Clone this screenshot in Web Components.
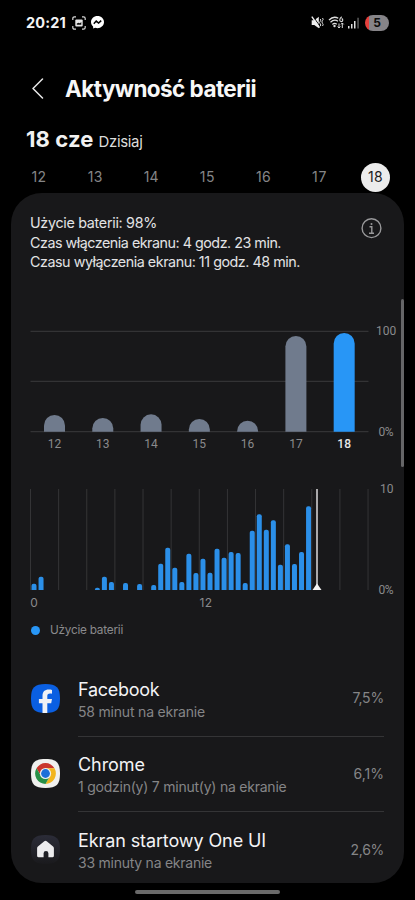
<!DOCTYPE html>
<html lang="pl">
<head>
<meta charset="utf-8">
<title>Aktywność baterii</title>
<style>
html,body{margin:0;background:#000;overflow:hidden}
body{width:415px;height:900px;font-family:Inter,"Noto Sans",sans-serif;color:#f1f1f3}
</style>
</head>
<body>
<battery-screen></battery-screen>
<script>
const define = (name, html, setup) => customElements.define(name, class extends HTMLElement {
  connectedCallback() {
    if (this.shadowRoot) return;
    const t = document.createElement('template');
    t.innerHTML = typeof html === 'function' ? html(this) : html;
    this.attachShadow({mode: 'open'}).append(t.content.cloneNode(true));
    if (setup) setup(this);
  }
});

/* One line of text, tracked so that it fills the width given in "w". */
define('fit-text', el => `<style>
:host{display:block;flex:none;white-space:pre;line-height:1.2}
span{display:inline-block}
</style><span>${el.getAttribute('text')}</span>`, el => {
  const s = el.shadowRoot.querySelector('span'), w = +el.getAttribute('w');
  if (!w) return;
  const n = [...s.textContent].length, gap = (w - s.getBoundingClientRect().width) / n;
  s.style.letterSpacing = gap.toFixed(3) + 'px';
});

define('status-bar', `<style>
:host{display:flex;height:45px;align-items:center;padding:0 26px;box-sizing:border-box}
fit-text{font-size:14.5px;font-weight:700;color:#f4f4f4}
svg{display:block;flex:none}
.cap{margin-left:6px}.msg{margin-left:5px}
.right{display:flex;align-items:center;margin-left:auto}
.pill{width:24px;height:16px;border-radius:8px;margin-left:5px;background:linear-gradient(90deg,#e5403c 4px,#868488 4px);display:flex;align-items:center;justify-content:center;color:#0c0c0c;font:700 12px/16px Inter,sans-serif}
</style>
<fit-text text="20:21" w="40"></fit-text>
<svg class="cap" width="14" height="14" viewBox="0 0 14 14" fill="none" stroke="#d8d8d8" stroke-width="1.2"><path d="M.8 4V2.5Q.8.8 2.5.8H4M10 .8h1.500Q13.200.8 13.200 2.500V4M13.200 10v1.500Q13.200 13.200 11.500 13.200H10M4 13.200H2.500Q.8 13.200.8 11.500V10"/><rect x="3.300" y="3.500" width="7.400" height="7" rx="1" fill="#e8e8e8" stroke="none"/><path d="M4.800 8.800V7.600l1.700-.9 1.400.6L9.300 6v2.800z" fill="#111" stroke="none"/></svg>
<svg class="msg" width="13" height="13" viewBox="0 0 13 13"><path fill="#fff" d="M6.500 0C2.800 0 0 2.700 0 6.100c0 1.900.8 3.400 2.100 4.500l.1 2 2-.8c.7.200 1.500.4 2.300.4C10.200 12.200 13 9.500 13 6.100S10.200 0 6.500 0z"/><path d="M2.800 7.700l2.400-2.600 2.400 2L10.200 4.600" fill="none" stroke="#000" stroke-width="1.500"/></svg>
<div class="right">
<svg width="13" height="13" viewBox="0 0 13 13"><path fill="#eee" d="M.7 4.200h2.600L7.800.8v11.400L3.300 9H.7z"/><path d="M2 .2l7 10.200" stroke="#000" stroke-width="1"/><path d="M.8.600l7.700 11" stroke="#eee" stroke-width="1.400"/><path d="M9.200 3q1.300 1.200 0 2.400t0 2.400 0 2.400M11.500 2q1.300 1.300 0 2.600t0 2.700 0 2.700" stroke="#ddd" stroke-width="1" fill="none"/></svg>
<svg width="17" height="13" viewBox="0 0 17 13" style="margin-left:4px" fill="none" stroke="#ddd" stroke-width="1.300"><path d="M1 4Q5.500-.5 10.300 2.300M2.500 6.200q3.800-3.600 7.500-1M4.400 8.400q2.200-2 4.400-.2"/><circle cx="6.500" cy="10" r="1.200" fill="#ddd" stroke="none"/><path d="M13.700.8q-1.900 1.400-1.900 3a1.500 1.500 0 1 0 1.800-1.200" stroke-width="1.100"/><path d="M11 7.500v4.500M9.700 10.500L11 12l1.400-1.500M14.300 12V7M13 8.400L14.300 7l1.400 1.400" stroke-width="1"/></svg>
<svg width="12" height="12" viewBox="0 0 12 12" style="margin-left:3px"><path fill="#ddd" d="M0 9h1.500v2.500H0zM3 7h1.500v4.500H3zM6 4h1.500v7.500H6z"/><path fill="#5c5c5c" d="M9.300.7h1.500v10.800H9.300z"/></svg>
<div class="pill">5</div></div>`);

define('page-header', `<style>
:host{display:flex;height:40px;margin-top:23px;align-items:center;padding-left:32px}
svg{display:block;margin-right:21px}
fit-text{font-size:22.5px;font-weight:700;color:#f7f7f7}
</style>
<svg width="12" height="21" viewBox="0 0 12 21" fill="none" stroke="#e8e8e8" stroke-width="1.500" stroke-linecap="round" stroke-linejoin="round"><path d="M10.500 1L1 10.500 10.500 20"/></svg>
<fit-text text="Aktywność baterii" w="191"></fit-text>`);

define('date-heading', `<style>
:host{display:flex;align-items:baseline;height:28px;margin-top:17px;padding-left:26px;gap:5px}
.a{font-size:22px;line-height:28px;font-weight:700;color:#f1f1f1}
.b{font-size:15px;color:#dcdcdc}
</style><fit-text class="a" text="18 cze" w="67.500"></fit-text><fit-text class="b" text="Dzisiaj" w="44"></fit-text>`);

define('day-picker', `<style>
:host{display:grid;grid-template-columns:repeat(7,56.1px);height:30px;margin:9px 0 1px 11px}
div{display:flex;align-items:center;justify-content:center;color:#858587;font-size:14px}
div.on{color:#1b1b1d}
.on span{width:29px;height:29px;border-radius:50%;background:#ececec;display:flex;align-items:center;justify-content:center}
</style>` + [12,13,14,15,16,17,18].map(d => `<div class="${d === 18 ? 'on' : ''}"><span><fit-text text="${d}" w="15"></fit-text></span></div>`).join(''));

define('usage-card', `<style>
:host{display:flex;flex-direction:column;position:relative;margin-left:11px;width:393px;height:690px;border-radius:31px;background:#18181a;overflow:hidden}
::slotted(*){flex:none}
i{position:absolute;right:0;top:106px;width:3.500px;height:168px;border-radius:2px;background:#656567}
</style><slot></slot><i></i>`);

define('usage-summary', `<style>
:host{display:flex;justify-content:space-between;height:60px;margin:20px 22px 0 19px;color:#e3e3e5;font-size:14.300px}
fit-text{line-height:19.600px}
svg{display:block;margin-top:5px}
</style><div><fit-text text="Użycie baterii: 98%" w="127"></fit-text><fit-text text="Czas włączenia ekranu: 4 godz. 23 min." w="251"></fit-text><fit-text text="Czasu wyłączenia ekranu: 11 godz. 48 min." w="270"></fit-text></div>
<svg width="21" height="21" viewBox="0 0 21 21" fill="none" stroke="#98989a" stroke-width="1.400"><circle cx="10.500" cy="10.200" r="9.400"/><path d="M8.500 8.800h2.300v6.500M8 15.300h5"/><circle cx="10.500" cy="5.900" r="1" fill="#98989a" stroke="none"/></svg>`);

define('daily-chart', () => {
  const tops = [415,418,414.3,419,420.7,336,333];
  let s = '';
  for (const y of [331.3,381.300,431.700]) s += `<path d="M30.500 ${y}H368.500" stroke="#3b3b3d"/>`;
  tops.forEach((t, i) => {
    const c = 54.500 + 48.280 * i, r = Math.min(10.500, 431.700 - t), on = i === 6;
    s += `<path fill="${on ? '#2896f6' : '#707b8d'}" d="M${c-10.500} 431.700V${t+r}A10.500 ${r} 0 0 1 ${c+10.500} ${t+r}V431.700z"/>`;
    s += `<text x="${c}" y="448.200" text-anchor="middle" ${on ? 'fill="#e6e6e6" font-weight="500"' : ''}>${12+i}</text>`;
  });
  return `<style>:host{display:block;height:197px}svg{display:block;font:12px Roboto,sans-serif}</style>
<svg width="393" height="197" viewBox="11 273 393 197" fill="#8a8a8c">${s}<text x="376" y="335">100</text><text x="378.500" y="435.800" letter-spacing="-.5">0%</text></svg>`;
});

define('hourly-chart', () => {
  const tops = {0:583.7,1:576.7,9:587.7,10:576.7,11:582,13:583,15:584,17:585,18:563.7,19:547.7,20:567.7,21:582,22:553.7,23:573,24:558.7,25:572.7,26:548.7,27:557.7,28:552,29:553,30:583,31:530.7,32:514.3,33:529.7,34:520.3,35:564.7,36:544.3,37:564,38:552,39:506.3};
  let s = '';
  for (let i = 0; i < 13; i++) s += `<path d="M${(30.500+28.130*i).toFixed(2)} 489V590" stroke="#343436"/>`;
  for (const [i, t] of Object.entries(tops)) {
    const c = 34 + 7.040 * i, r = Math.min(2, 590 - t);
    s += `<path fill="#2b8fe8" d="M${c-2.500} 590V${t+r}Q${c-2.500} ${t} ${c-2.500+r} ${t}H${c+2.500-r}Q${c+2.500} ${t} ${c+2.500} ${t+r}V590z"/>`;
  }
  return `<style>:host{display:block;height:145.500px}svg{display:block;font:12px Roboto,sans-serif}.h{font-family:Inter,sans-serif}</style>
<svg width="393" height="145" viewBox="11 470 393 145" fill="#8a8a8c">${s}<path d="M317 489V586" stroke="#aaa9ab" stroke-width="2"/><path d="M317 583.500L321.500 590H312.500z" fill="#f4f4f4"/>
<text x="380" y="493.200">10</text><text x="378.500" y="594" letter-spacing="-.5">0%</text><text class="h" x="30.300" y="607.300">0</text><text class="h" x="199.500" y="607.300" textLength="12.500">12</text></svg>`;
});

define('chart-legend', `<style>
:host{display:flex;align-items:center;height:30px;padding-left:19.500px;color:#8a8a8c;font-size:11.800px}
b{width:9px;height:9px;border-radius:50%;background:#2896f6;margin-right:10.500px}
</style><b></b><fit-text text="Użycie baterii" w="73"></fit-text>`);

define('app-row', el => `<style>
:host{display:flex;height:75.600px;padding:0 20px 0 20px;box-sizing:border-box}
::slotted(svg){display:block;flex:none;margin:22.800px 18px 0 0}
.body{flex:1;display:flex;align-items:center;box-sizing:border-box;border-bottom:${el.hasAttribute('last') ? '0' : '1px solid #343436'}}
.txt{flex:1;padding-top:3px}
.t{font-size:18px;line-height:23px;color:#f3f3f5}
.s{font-size:14px;line-height:21px;color:#858587}
.p{font-size:14px;color:#858587;margin-top:1px}
</style><slot></slot><div class="body"><div class="txt"><fit-text class="t" text="${el.getAttribute('name')}" w="${el.getAttribute('nw')}"></fit-text><fit-text class="s" text="${el.getAttribute('time')}" w="${el.getAttribute('tw')}"></fit-text></div><fit-text class="p" text="${el.getAttribute('pct')}" w="${el.getAttribute('pw')}"></fit-text></div>`);

define('app-list', `<style>:host{display:block;margin-top:15.500px}svg{display:block}</style>
<app-row name="Facebook" nw="81.500" time="58 minut na ekranie" tw="127" pct="7,5%" pw="31.500"><svg width="29" height="29" viewBox="0 0 29 29"><path fill="#0a5fe2" d="M14.500 0C25.500 0 29 3.500 29 14.500S25.500 29 14.500 29 0 25.500 0 14.500 3.500 0 14.500 0z"/><path fill="#eef0f5" d="M11.500 29V19.300H7.900V15h3.600v-2.700c0-4.700 2.200-6.700 6.300-6.700 1.200 0 2.400.1 3.200.3v3.800c-.5-.1-1.200-.1-1.900-.1-2.200 0-2.800.9-2.800 2.800V15H21l-.8 4.300h-3.900V29z"/></svg></app-row>
<app-row name="Chrome" nw="67" time="1 godzin(y) 7 minut(y) na ekranie" tw="208.500" pct="6,1%" pw="30.500"><svg width="29" height="29" viewBox="0 0 29 29"><path fill="#f0f0ee" d="M14.500 0C25.500 0 29 3.500 29 14.500S25.500 29 14.500 29 0 25.500 0 14.500 3.500 0 14.500 0z"/><path fill="#c9362c" d="M5.500 9.300A10.400 10.400 0 0 1 23.500 9.300H14.500L10 17z"/><path fill="#f2b51d" d="M23.500 9.300A10.400 10.400 0 0 1 14.500 24.900L19 17.100 14.500 9.300z"/><path fill="#279047" d="M14.500 24.900A10.400 10.400 0 0 1 5.500 9.300L10 17.100H19z"/><circle cx="14.500" cy="14.500" r="5.600" fill="#f0f0ee"/><circle cx="14.500" cy="14.500" r="4.400" fill="#1d6fd8"/></svg></app-row>
<app-row last name="Ekran startowy One UI" nw="188" time="33 minuty na ekranie" tw="134" pct="2,6%" pw="33.500"><svg width="29" height="29" viewBox="0 0 29 29"><defs><linearGradient id="g" x2="0" y2="1"><stop stop-color="#2b2c38"/><stop offset="1" stop-color="#1a1a1d"/></linearGradient></defs><path fill="url(#g)" d="M14.500 0C25.500 0 29 3.500 29 14.500S25.500 29 14.500 29 0 25.500 0 14.500 3.500 0 14.500 0z"/><path fill="#ececee" d="M13.300 6.300q1.200-1 2.400 0l6.400 5.200q.8.700.8 1.700v7.500q0 1.500-1.500 1.500h-4v-4q0-2.300-2.400-2.300t-2.400 2.300v4h-5q-1.500 0-1.500-1.500v-7.500q0-1 .8-1.700z"/></svg></app-row>`);

define('battery-screen', `<style>
:host{display:flex;flex-direction:column;width:415px;height:900px;background:#000;overflow:hidden}
.nav{width:145px;height:4px;border-radius:2px;background:#6a6a6a;margin:7px 0 0 135px}
</style>
<status-bar></status-bar><page-header></page-header><date-heading></date-heading><day-picker></day-picker>
<usage-card><usage-summary></usage-summary><daily-chart></daily-chart><hourly-chart></hourly-chart><chart-legend></chart-legend><app-list></app-list></usage-card>
<div class="nav"></div>`);
</script>
</body>
</html>
